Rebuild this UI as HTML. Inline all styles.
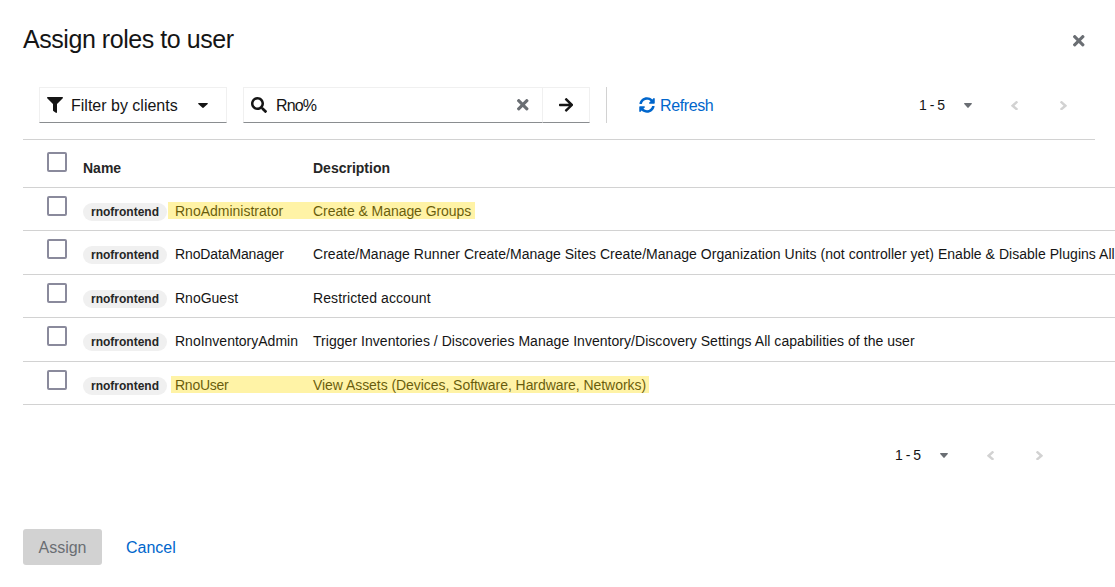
<!DOCTYPE html>
<html><head><meta charset="utf-8">
<style>
*{box-sizing:border-box;margin:0;padding:0}
html,body{width:1115px;height:587px;overflow:hidden;background:#fff}
body{position:relative;font-family:"Liberation Sans",sans-serif;color:#151515}
.a{position:absolute;white-space:nowrap}
svg{position:absolute;display:block}
.t14{font-size:14px;line-height:16px}
.t16{font-size:16px;line-height:18px}
.cb{position:absolute;width:20px;height:20px;border:2px solid #8a8a9c;border-radius:2px;background:#fff}
.lbl{position:absolute;left:83px;width:84px;height:18px;border-radius:9px;background:#f0f0f0;font-size:12px;font-weight:700;line-height:18px;text-align:center;color:#262626}
.hl{position:absolute;height:17px;background:rgba(255,220,0,0.35)}
.bd{position:absolute;height:1px;background:#d2d2d2}
</style></head><body>

<div class="a" id="title" style="left:23px;top:26px;font-size:25px;line-height:26px;letter-spacing:-0.45px">Assign roles to user</div>

<!-- close -->
<svg style="left:1073px;top:35px" width="11.5" height="11.5" viewBox="0 80 352 352"><path fill="#6a6e73" d="M242.72 256l100.07-100.07c12.28-12.28 12.28-32.19 0-44.48l-22.24-22.24c-12.28-12.280-32.190-12.280-44.48 0L176 189.28 75.930 89.210c-12.280-12.280-32.190-12.280-44.480 0L9.210 111.450c-12.280 12.280-12.280 32.190 0 44.480L109.28 256 9.210 356.070c-12.280 12.280-12.280 32.190 0 44.480l22.240 22.240c12.280 12.280 32.200 12.280 44.480 0L176 322.72l100.07 100.07c12.280 12.280 32.200 12.280 44.480 0l22.240-22.240c12.280-12.280 12.280-32.190 0-44.480L242.72 256z"/></svg>

<!-- filter dropdown -->
<div class="a" style="left:39px;top:87px;width:188px;height:36px;border:1px solid #f0f0f0;border-bottom-color:#8a8d90"></div>
<svg style="left:47px;top:97px" width="16" height="16" viewBox="0 0 512 512"><path fill="#151515" d="M487.976 0H24.028C2.71 0-8.047 25.866 7.058 40.971L192 225.941V432c0 7.831 3.821 15.17 10.237 19.662l80 55.98C298.02 518.69 320 507.493 320 487.98V225.941l184.947-184.97C520.021 25.896 509.338 0 487.976 0z"/></svg>
<div class="a t16" style="left:71px;top:97px">Filter by clients</div>
<svg style="left:198px;top:103px" width="10" height="5" viewBox="8 192 304 168" preserveAspectRatio="none"><path fill="#151515" d="M31.3 192h257.3c17.8 0 26.7 21.5 14.1 34.1L174.1 354.8c-7.8 7.8-20.5 7.8-28.3 0L17.2 226.1C4.6 213.5 13.5 192 31.3 192z"/></svg>

<!-- search -->
<div class="a" style="left:243px;top:87px;width:300px;height:36px;border:1px solid #f0f0f0;border-bottom-color:#8a8d90"></div>
<svg style="left:251px;top:97px" width="16" height="16" viewBox="0 0 512 512"><path fill="#151515" d="M505 442.7L405.3 343c-4.5-4.5-10.6-7-17-7H372c27.6-35.3 44-79.7 44-128C416 93.1 322.9 0 208 0S0 93.1 0 208s93.1 208 208 208c48.3 0 92.7-16.4 128-44v16.3c0 6.4 2.5 12.5 7 17l99.7 99.7c9.4 9.4 24.6 9.4 33.9 0l28.3-28.3c9.4-9.4 9.4-24.6.1-34zM208 336c-70.7 0-128-57.2-128-128 0-70.7 57.2-128 128-128 70.7 0 128 57.2 128 128 0 70.7-57.2 128-128 128z"/></svg>
<div class="a t16" style="left:276px;top:97px;letter-spacing:-0.9px">Rno%</div>
<svg style="left:517px;top:99px" width="11.5" height="11.5" viewBox="0 80 352 352"><path fill="#6a6e73" d="M242.72 256l100.07-100.07c12.28-12.28 12.28-32.19 0-44.48l-22.24-22.24c-12.28-12.280-32.190-12.280-44.48 0L176 189.28 75.930 89.210c-12.280-12.280-32.190-12.280-44.480 0L9.210 111.450c-12.280 12.280-12.280 32.190 0 44.480L109.28 256 9.210 356.070c-12.280 12.280-12.280 32.190 0 44.480l22.240 22.240c12.280 12.280 32.200 12.280 44.480 0L176 322.72l100.07 100.07c12.280 12.280 32.200 12.280 44.480 0l22.240-22.240c12.280-12.280 12.280-32.190 0-44.480L242.72 256z"/></svg>
<div class="a" style="left:542px;top:87px;width:48px;height:36px;border:1px solid #f0f0f0;border-bottom-color:#8a8d90"></div>
<svg style="left:559px;top:98.2px" width="14.2" height="13.8" viewBox="0 37.7 448 436.6" preserveAspectRatio="none"><path fill="#151515" d="M190.5 66.9l22.2-22.2c9.4-9.4 24.6-9.4 33.9 0L441 239c9.4 9.4 9.4 24.6 0 33.9L246.6 467.3c-9.4 9.4-24.6 9.4-33.9 0l-22.2-22.2c-9.5-9.5-9.3-25 .4-34.3L311.4 296H24c-13.3 0-24-10.7-24-24v-32c0-13.3 10.7-24 24-24h287.4L190.9 101.2c-9.8-9.3-10-24.8-.4-34.3z"/></svg>

<div class="a" style="left:606px;top:87px;width:1px;height:36px;background:#d2d2d2"></div>

<!-- refresh -->
<svg style="left:639px;top:97px" width="16" height="16" viewBox="0 0 512 512"><path fill="#0066cc" d="M370.72 133.28C339.458 104.008 298.888 87.962 255.848 88c-77.458.068-144.328 53.178-162.791 126.85-1.344 5.363-6.122 9.15-11.651 9.15H24.103c-7.498 0-13.194-6.807-11.807-14.176C33.933 94.924 134.813 8 256 8c66.448 0 126.791 26.136 171.315 68.685L463.03 40.97C478.149 25.851 504 36.559 504 57.941V192c0 13.255-10.745 24-24 24H345.941c-21.382 0-32.090-25.851-16.971-40.971l41.750-41.749zM32 296h134.059c21.382 0 32.090 25.851 16.971 40.971l-41.750 41.750c31.262 29.273 71.835 45.319 114.876 45.280 77.418-.070 144.315-53.144 162.787-126.849 1.344-5.363 6.122-9.150 11.651-9.150h57.304c7.498 0 13.194 6.807 11.807 14.176C478.067 417.076 377.187 504 256 504c-66.448 0-126.791-26.136-171.315-68.685L48.970 471.030C33.851 486.149 8 475.441 8 454.059V320c0-13.255 10.745-24 24-24z"/></svg>
<div class="a t16" style="left:660px;top:97px;color:#0066cc;letter-spacing:-0.4px">Refresh</div>

<!-- top pagination -->
<div class="a t14" style="left:919px;top:97px;letter-spacing:-0.5px">1 - 5</div>
<svg style="left:964px;top:103px" width="8" height="5" viewBox="8 192 304 168" preserveAspectRatio="none"><path fill="#6a6e73" d="M31.3 192h257.3c17.8 0 26.7 21.5 14.1 34.1L174.1 354.8c-7.8 7.8-20.5 7.8-28.3 0L17.2 226.1C4.6 213.5 13.5 192 31.3 192z"/></svg>
<svg style="left:1011px;top:100.8px" width="7" height="9.3" viewBox="24 96 208 320" preserveAspectRatio="none"><path fill="#d2d2d2" d="M31.7 239l136-136c9.4-9.4 24.6-9.4 33.9 0l22.6 22.6c9.4 9.4 9.4 24.6 0 33.9L127.9 256l96.4 96.4c9.4 9.4 9.4 24.6 0 33.9L201.7 409c-9.4 9.4-24.6 9.4-33.9 0l-136-136c-9.5-9.4-9.5-24.6-.1-34z"/></svg>
<svg style="left:1060px;top:100.8px" width="7" height="9.3" viewBox="24 96 208 320" preserveAspectRatio="none"><path fill="#d2d2d2" d="M224.3 273l-136 136c-9.4 9.4-24.6 9.4-33.9 0l-22.6-22.6c-9.4-9.4-9.4-24.6 0-33.9l96.4-96.4-96.4-96.4c-9.4-9.4-9.4-24.6 0-33.9L54.3 103c9.4-9.4 24.6-9.4 33.9 0l136 136c9.5 9.4 9.5 24.6.1 34z"/></svg>

<div class="bd" style="left:23px;top:139px;width:1072px"></div>

<!-- table header -->
<div class="cb" style="left:47px;top:152px"></div>
<div class="a t14" style="left:83px;top:160px;font-weight:700;color:#262626">Name</div>
<div class="a t14" style="left:313px;top:160px;font-weight:700;color:#262626">Description</div>
<div class="bd" style="left:23px;top:187px;width:1092px"></div>

<div id="rows"></div>
<div class="cb" style="left:47px;top:196px"></div>
<div class="lbl" style="top:203px">rnofrontend</div>
<div class="a t14" style="left:175px;top:203px">RnoAdministrator</div>
<div class="a t14" style="left:313px;top:203px;letter-spacing:-0.06px">Create &amp; Manage Groups</div>
<div class="hl" style="left:168px;top:202px;width:307px"></div>
<div class="bd" style="left:23px;top:230px;width:1092px"></div>
<div class="cb" style="left:47px;top:239px"></div>
<div class="lbl" style="top:246px">rnofrontend</div>
<div class="a t14" style="left:175px;top:246px;letter-spacing:-0.12px">RnoDataManager</div>
<div class="a t14" style="left:313px;top:246px;letter-spacing:0.033px">Create/Manage Runner Create/Manage Sites Create/Manage Organization Units (not controller yet) Enable &amp; Disable Plugins All capabilities of the user</div>
<div class="bd" style="left:23px;top:274px;width:1092px"></div>
<div class="cb" style="left:47px;top:283px"></div>
<div class="lbl" style="top:290px">rnofrontend</div>
<div class="a t14" style="left:175px;top:290px">RnoGuest</div>
<div class="a t14" style="left:313px;top:290px;letter-spacing:0.1px">Restricted account</div>
<div class="bd" style="left:23px;top:317px;width:1092px"></div>
<div class="cb" style="left:47px;top:326px"></div>
<div class="lbl" style="top:333px">rnofrontend</div>
<div class="a t14" style="left:175px;top:333px">RnoInventoryAdmin</div>
<div class="a t14" style="left:313px;top:333px;letter-spacing:0.038px">Trigger Inventories / Discoveries Manage Inventory/Discovery Settings All capabilities of the user</div>
<div class="bd" style="left:23px;top:361px;width:1092px"></div>
<div class="cb" style="left:47px;top:370px"></div>
<div class="lbl" style="top:377px">rnofrontend</div>
<div class="a t14" style="left:175px;top:377px;letter-spacing:-0.25px">RnoUser</div>
<div class="a t14" style="left:313px;top:377px;letter-spacing:-0.056px">View Assets (Devices, Software, Hardware, Networks)</div>
<div class="hl" style="left:171px;top:376px;width:478px"></div>
<div class="bd" style="left:23px;top:404px;width:1092px"></div>

<!-- bottom pagination -->
<div class="a t14" style="left:895px;top:447px;letter-spacing:-0.5px">1 - 5</div>
<svg style="left:940px;top:453px" width="8" height="5" viewBox="8 192 304 168" preserveAspectRatio="none"><path fill="#6a6e73" d="M31.3 192h257.3c17.8 0 26.7 21.5 14.1 34.1L174.1 354.8c-7.8 7.8-20.5 7.8-28.3 0L17.2 226.1C4.6 213.5 13.5 192 31.3 192z"/></svg>
<svg style="left:987px;top:450.8px" width="7" height="9.3" viewBox="24 96 208 320" preserveAspectRatio="none"><path fill="#d2d2d2" d="M31.7 239l136-136c9.4-9.4 24.6-9.4 33.9 0l22.6 22.6c9.4 9.4 9.4 24.6 0 33.9L127.9 256l96.4 96.4c9.4 9.4 9.4 24.6 0 33.9L201.7 409c-9.4 9.4-24.6 9.4-33.9 0l-136-136c-9.5-9.4-9.5-24.6-.1-34z"/></svg>
<svg style="left:1036px;top:450.8px" width="7" height="9.3" viewBox="24 96 208 320" preserveAspectRatio="none"><path fill="#d2d2d2" d="M224.3 273l-136 136c-9.4 9.4-24.6 9.4-33.9 0l-22.6-22.6c-9.4-9.4-9.4-24.6 0-33.9l96.4-96.4-96.4-96.4c-9.4-9.4-9.4-24.6 0-33.9L54.3 103c9.4-9.4 24.6-9.4 33.9 0l136 136c9.5 9.4 9.5 24.6.1 34z"/></svg>

<!-- footer buttons -->
<div class="a t16" style="left:23px;top:529px;width:79px;height:36px;border-radius:3px;background:#d2d2d2;color:#6a6e73;text-align:center;line-height:38px">Assign</div>
<div class="a t16" style="left:126px;top:539px;color:#0066cc">Cancel</div>

</body></html>
